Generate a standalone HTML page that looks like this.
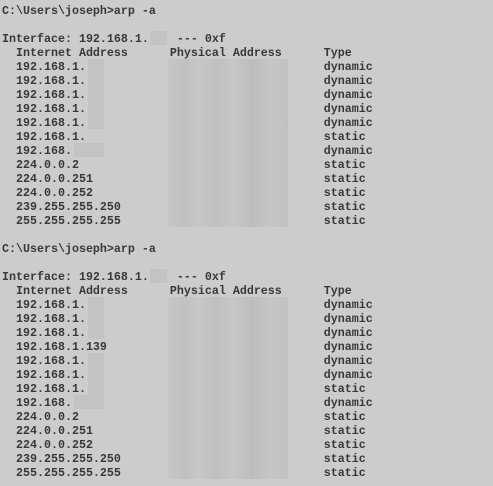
<!DOCTYPE html>
<html><head><style>
body{margin:0;background:#cccccc;width:493px;height:486px;overflow:hidden;position:relative}
pre{margin:0;position:absolute;left:2px;top:4px;font-family:"Liberation Mono",monospace;font-size:11.67px;line-height:14px;color:#383838;font-weight:bold}
.b{position:absolute;background:#c3c3c3}
.p{position:absolute;left:168px;width:120px;height:14px;background:linear-gradient(90deg,#c6c6c6 0,#c0c0c0 15%,#c8c8c8 25%,#bfbfbf 40%,#c7c7c7 55%,#bcbcbc 70%,#c6c6c6 85%,#c1c1c1 100%)}
</style></head><body>
<div class="b" style="left:150px;top:31px;width:17px;height:14px"></div>
<div class="b" style="left:150px;top:269px;width:17px;height:14px"></div>
<div class="p" style="top:59px"></div><div class="p" style="top:73px"></div><div class="p" style="top:87px"></div><div class="p" style="top:101px"></div><div class="p" style="top:115px"></div><div class="p" style="top:129px"></div><div class="p" style="top:143px"></div><div class="p" style="top:157px"></div><div class="p" style="top:171px"></div><div class="p" style="top:185px"></div><div class="p" style="top:199px"></div><div class="p" style="top:213px"></div>
<div class="p" style="top:297px"></div><div class="p" style="top:311px"></div><div class="p" style="top:325px"></div><div class="p" style="top:339px"></div><div class="p" style="top:353px"></div><div class="p" style="top:367px"></div><div class="p" style="top:381px"></div><div class="p" style="top:395px"></div><div class="p" style="top:409px"></div><div class="p" style="top:423px"></div><div class="p" style="top:437px"></div><div class="p" style="top:451px"></div><div class="p" style="top:465px"></div>
<div class="b" style="left:88px;top:59px;width:16px;height:14px"></div>
<div class="b" style="left:88px;top:73px;width:16px;height:14px"></div>
<div class="b" style="left:88px;top:87px;width:16px;height:14px"></div>
<div class="b" style="left:88px;top:101px;width:16px;height:14px"></div>
<div class="b" style="left:88px;top:115px;width:16px;height:14px"></div>
<div class="b" style="left:74px;top:143px;width:30px;height:14px"></div>
<div class="b" style="left:88px;top:297px;width:16px;height:14px"></div>
<div class="b" style="left:88px;top:311px;width:16px;height:14px"></div>
<div class="b" style="left:88px;top:325px;width:16px;height:14px"></div>
<div class="b" style="left:88px;top:353px;width:16px;height:14px"></div>
<div class="b" style="left:88px;top:367px;width:16px;height:14px"></div>
<div class="b" style="left:88px;top:381px;width:16px;height:14px"></div>
<div class="b" style="left:74px;top:395px;width:30px;height:14px"></div>
<pre>C:\Users\joseph&gt;arp -a

Interface: 192.168.1.    --- 0xf
  Internet Address      Physical Address      Type
  192.168.1.                                  dynamic
  192.168.1.                                  dynamic
  192.168.1.                                  dynamic
  192.168.1.                                  dynamic
  192.168.1.                                  dynamic
  192.168.1.                                  static
  192.168.                                    dynamic
  224.0.0.2                                   static
  224.0.0.251                                 static
  224.0.0.252                                 static
  239.255.255.250                             static
  255.255.255.255                             static

C:\Users\joseph&gt;arp -a

Interface: 192.168.1.    --- 0xf
  Internet Address      Physical Address      Type
  192.168.1.                                  dynamic
  192.168.1.                                  dynamic
  192.168.1.                                  dynamic
  192.168.1.139                               dynamic
  192.168.1.                                  dynamic
  192.168.1.                                  dynamic
  192.168.1.                                  static
  192.168.                                    dynamic
  224.0.0.2                                   static
  224.0.0.251                                 static
  224.0.0.252                                 static
  239.255.255.250                             static
  255.255.255.255                             static</pre>
</body></html>
